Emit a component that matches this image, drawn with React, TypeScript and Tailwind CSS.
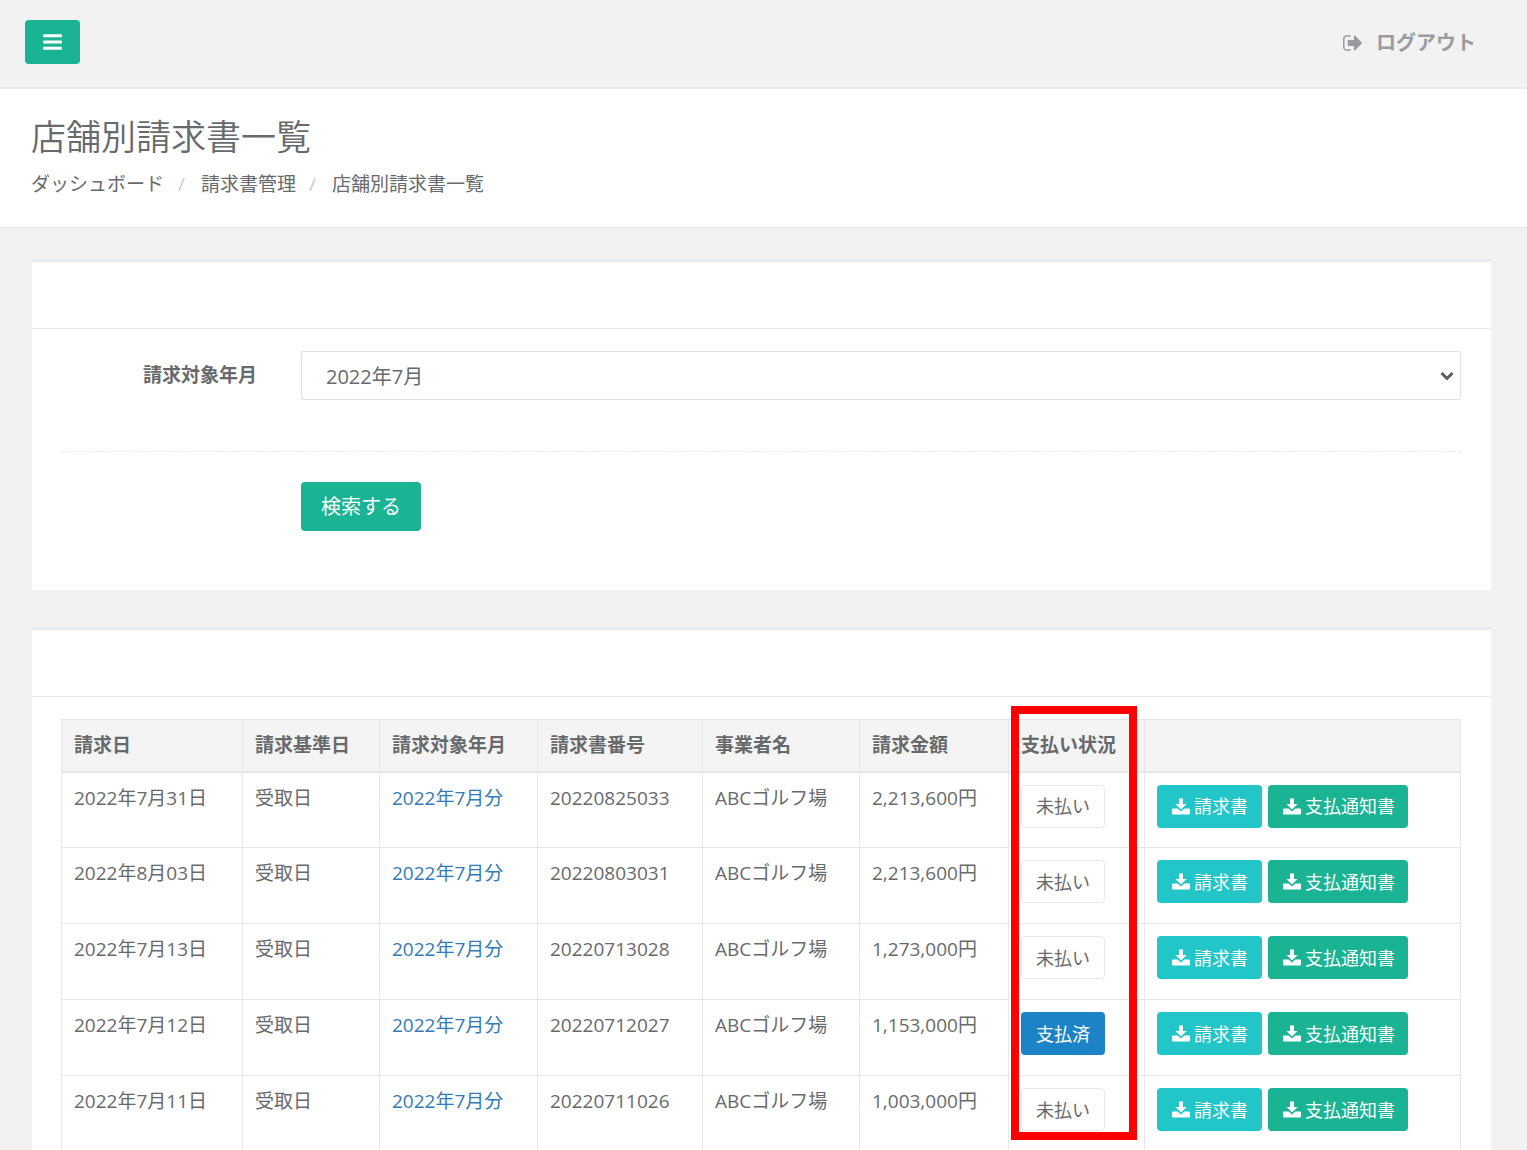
import React, { useState } from 'react';

interface Invoice {
  date: string;
  basis: string;
  month: string;
  number: string;
  client: string;
  amount: string;
  paid: boolean;
}

const invoices: Invoice[] = [
  { date: '2022年7月31日', basis: '受取日', month: '2022年7月分', number: '20220825033', client: 'ABCゴルフ場', amount: '2,213,600円', paid: false },
  { date: '2022年8月03日', basis: '受取日', month: '2022年7月分', number: '20220803031', client: 'ABCゴルフ場', amount: '2,213,600円', paid: false },
  { date: '2022年7月13日', basis: '受取日', month: '2022年7月分', number: '20220713028', client: 'ABCゴルフ場', amount: '1,273,000円', paid: false },
  { date: '2022年7月12日', basis: '受取日', month: '2022年7月分', number: '20220712027', client: 'ABCゴルフ場', amount: '1,153,000円', paid: true },
  { date: '2022年7月11日', basis: '受取日', month: '2022年7月分', number: '20220711026', client: 'ABCゴルフ場', amount: '1,003,000円', paid: false },
];

const BarsIcon = () => (
  <svg viewBox="0 0 1536 1792" className="h-[22px] w-[19px]" fill="currentColor" aria-hidden="true">
    <path d="M1536 1344v128q0 26-19 45t-45 19h-1408q-26 0-45-19t-19-45v-128q0-26 19-45t45-19h1408q26 0 45 19t19 45zm0-512v128q0 26-19 45t-45 19h-1408q-26 0-45-19t-19-45v-128q0-26 19-45t45-19h1408q26 0 45 19t19 45zm0-512v128q0 26-19 45t-45 19h-1408q-26 0-45-19t-19-45v-128q0-26 19-45t45-19h1408q26 0 45 19t19 45z" />
  </svg>
);

const SignOutIcon = () => (
  <svg viewBox="0 0 1568 1792" className="h-[22px] w-[19px]" fill="currentColor" aria-hidden="true">
    <path d="M640 1440q0 4 1 20t.5 26.5-3 23.5-10 19.5-20.5 6.5h-320q-119 0-203.5-84.5t-84.5-203.5v-704q0-119 84.5-203.5t203.5-84.5h320q13 0 22.5 9.5t9.5 22.5q0 4 1 20t.5 26.5-3 23.5-10 19.5-20.5 6.5h-320q-66 0-113 47t-47 113v704q0 66 47 113t113 47h312l11.5 1 11.5 3 8 5.5 7 9 2 13.5zm928-544q0 26-19 45l-544 544q-19 19-45 19t-45-19-19-45v-288h-448q-26 0-45-19t-19-45v-384q0-26 19-45t45-19h448v-288q0-26 19-45t45-19 45 19l544 544q19 19 19 45z" />
  </svg>
);

const DownloadIcon = () => (
  <svg viewBox="0 0 18 17" className="h-[17px] w-[18px]" fill="currentColor" aria-hidden="true">
    <path d="M7 0.5h4v5.5h3.6L9 11.6 3.4 6H7z" />
    <path d="M1 10.5h4.6L9 13.6l3.4-3.1H17a1 1 0 0 1 1 1V15.5a1 1 0 0 1-1 1H1a1 1 0 0 1-1-1V11.5a1 1 0 0 1 1-1z" />
  </svg>
);

interface PanelProps {
  children: React.ReactNode;
  className?: string;
}

const Panel: React.FC<PanelProps> = ({ children, className = '' }) => (
  <section className={`border-t-[3px] border-[#e7eaec] bg-white ${className}`}>
    <div className="h-[67px] border-b border-[#e7eaec]" />
    <div className="pt-[22px] pr-[30px] pl-[29px]">{children}</div>
  </section>
);

const InvoiceRow: React.FC<{ invoice: Invoice }> = ({ invoice }) => (
  <tr className="h-[76px]">
    <td className="border border-[#e7e7e7] px-3 py-3">{invoice.date}</td>
    <td className="border border-[#e7e7e7] px-3 py-3">{invoice.basis}</td>
    <td className="border border-[#e7e7e7] px-3 py-3">
      <a href="#" className="text-[#337ab7]">{invoice.month}</a>
    </td>
    <td className="border border-[#e7e7e7] px-3 py-3">{invoice.number}</td>
    <td className="border border-[#e7e7e7] px-3 py-3">{invoice.client}</td>
    <td className="border border-[#e7e7e7] px-3 py-3">{invoice.amount}</td>
    <td className="border border-[#e7e7e7] px-3 py-3">
      {invoice.paid ? (
        <button type="button" className="flex h-[43px] items-center rounded bg-[#1c84c6] px-[15px] text-lg text-white">支払済</button>
      ) : (
        <button type="button" className="flex h-[43px] items-center rounded border border-[#e7eaec] bg-white px-[14px] text-lg">未払い</button>
      )}
    </td>
    <td className="border border-[#e7e7e7] px-3 py-3">
      <div className="flex gap-1.5">
        <button type="button" className="flex h-[43px] items-center gap-1 rounded bg-[#23c6c8] pr-[14px] pl-[15px] text-lg text-white">
          <DownloadIcon />
          請求書
        </button>
        <button type="button" className="flex h-[43px] items-center gap-1 rounded bg-[#1ab394] pr-[13px] pl-[15px] text-lg text-white">
          <DownloadIcon />
          支払通知書
        </button>
      </div>
    </td>
  </tr>
);

export default function App() {
  const [month, setMonth] = useState('2022-07');

  return (
    <div className="min-h-screen bg-[#f2f2f2] font-['Open_Sans','Noto_Sans_CJK_JP',sans-serif] text-[19px] leading-[27px] text-[#676a6c]">
      <nav className="flex h-[89px] items-start justify-between border-b-2 border-[#ebebec] pt-5 pr-[51px] pl-[25px]">
        <button type="button" aria-label="メニュー" className="flex h-11 w-[55px] items-center justify-center rounded bg-[#1ab394] text-white">
          <BarsIcon />
        </button>
        <a href="#" className="flex h-[45px] items-center gap-[14px] text-xl font-semibold text-[#999c9e]">
          <SignOutIcon />
          ログアウト
        </a>
      </nav>

      <header className="h-[139px] border-b border-[#e7eaec] bg-white px-[31px] pt-7">
        <h1 className="text-[35px] leading-10 font-[350]">店舗別請求書一覧</h1>
        <ol className="mt-[14px] flex">
          <li><a href="#">ダッシュボード</a></li>
          <li className="before:mr-4 before:ml-[14px] before:text-[#ccc] before:content-['/']"><a href="#">請求書管理</a></li>
          <li className="before:mr-4 before:ml-[13px] before:text-[#ccc] before:content-['/']">店舗別請求書一覧</li>
        </ol>
      </header>

      <main className="flex flex-col gap-[37px] px-8 pt-[31px] pr-9">
        <Panel className="pb-[59px]">
          <form onSubmit={(e) => e.preventDefault()}>
            <div className="flex items-center gap-11">
              <label htmlFor="month" className="w-[196px] shrink-0 text-right font-bold">請求対象年月</label>
              <div className="relative flex-1">
                <select
                  id="month"
                  value={month}
                  onChange={(e) => setMonth(e.target.value)}
                  className="block h-[49px] w-full appearance-none rounded-[2px] border border-[#e0e2e4] bg-white px-6 pt-0.5 text-xl"
                >
                  <option value="2022-07">2022年7月</option>
                  <option value="2022-06">2022年6月</option>
                </select>
                <svg viewBox="0 0 14 10" className="pointer-events-none absolute top-5 right-[7px] h-[10px] w-[14px]" fill="none" stroke="#5c5e60" strokeWidth="3" aria-hidden="true">
                  <path d="M1.5 2 L7 7.5 L12.5 2" />
                </svg>
              </div>
            </div>
            <hr className="mt-[51px] border-dashed border-[#e7eaec]" />
            <button type="submit" className="mt-[30px] ml-[240px] h-[49px] rounded bg-[#1ab394] px-5 text-xl text-white">
              検索する
            </button>
          </form>
        </Panel>

        <Panel className="pb-8">
          <table className="w-full table-fixed border-collapse text-left">
            <thead>
              <tr className="h-[52px] bg-[#f4f4f4]">
                <th className="w-[181px] border border-b-2 border-[#e7e7e7] px-3">請求日</th>
                <th className="w-[137px] border border-b-2 border-[#e7e7e7] px-3">請求基準日</th>
                <th className="w-[158px] border border-b-2 border-[#e7e7e7] px-3">請求対象年月</th>
                <th className="w-[165px] border border-b-2 border-[#e7e7e7] px-3">請求書番号</th>
                <th className="w-[157px] border border-b-2 border-[#e7e7e7] px-3">事業者名</th>
                <th className="w-[149px] border border-b-2 border-[#e7e7e7] px-3">請求金額</th>
                <th className="relative w-[136px] border border-b-2 border-[#e7e7e7] px-3">
                  支払い状況
                  {/* highlight around the payment status column */}
                  <div className="pointer-events-none absolute -top-[14px] left-[2px] h-[434px] w-[126px] border-8 border-[#ff0000]" />
                </th>
                <th className="border border-b-2 border-[#e7e7e7] px-3" aria-label="ダウンロード" />
              </tr>
            </thead>
            <tbody className="align-top">
              {invoices.map((invoice) => (
                <InvoiceRow key={invoice.number} invoice={invoice} />
              ))}
            </tbody>
          </table>
        </Panel>
      </main>
    </div>
  );
}
